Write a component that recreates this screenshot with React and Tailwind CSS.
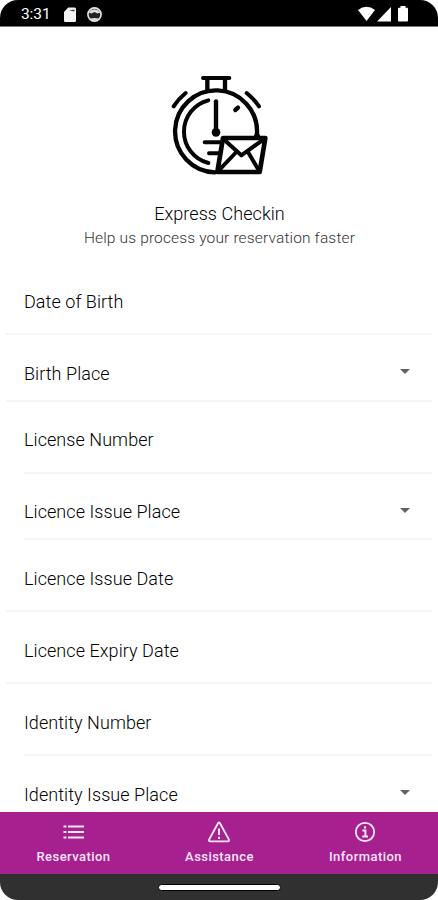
const fields = [
  { label: 'Date of Birth', inset: false },
  { label: 'Birth Place', inset: false, select: true },
  { label: 'License Number', inset: true },
  { label: 'Licence Issue Place', inset: true, select: true },
  { label: 'Licence Issue Date', inset: false },
  { label: 'Licence Expiry Date', inset: false },
  { label: 'Identity Number', inset: true },
  { label: 'Identity Issue Place', inset: true, select: true },
];

const StatusBar = () => (
  <header className="flex h-[27px] shrink-0 items-center justify-between border-b border-[#777] bg-black pl-[21px] pr-[29px] text-white">
    <div className="flex items-center">
      <span className="w-[29px] whitespace-nowrap pt-[3px] text-[15.5px] leading-none tracking-[-0.1px]">3:31</span>
      <svg className="ml-[14px] mt-[2px] h-[15px] w-[12px]" viewBox="0 0 12 15">
        <path d="M4.2 0.5H10.7Q12 0.5 12 2V13.5Q12 15 10.7 15H1.3Q0 15 0 13.5V5Z" fill="#f4f4f4" />
        <path d="M5 3.6L10.5 2.4V4.4Z" fill="#444" />
      </svg>
      <svg className="ml-[11px] mt-[2px] h-[15px] w-[15px]" viewBox="0 0 15 15">
        <circle cx="7.5" cy="7.5" r="6.6" fill="#222" stroke="#e8e8e8" strokeWidth="1.6" />
        <path d="M1.5 5.5Q7.5 -1 13.5 5.5L10.5 6.5L7.5 5L4.5 6.5Z" fill="#ddd" />
        <path d="M3 11.5Q7.5 10.5 12 11.5Q7.5 15.5 3 11.5Z" fill="#ddd" />
      </svg>
    </div>
    <svg className="mt-[1px] h-[16px] w-[51px]" viewBox="0 0 51 16" fill="#fff">
      <path d="M0 4Q8.5 -2.5 17 4L8.5 15Z" />
      <path d="M33 1V15.5H19Z" />
      <path d="M42.5 0H47.5V1.8H49Q50 1.8 50 3V14.5Q50 15.5 49 15.5H41Q40 15.5 40 14.5V3Q40 1.8 41 1.8H42.5Z" />
    </svg>
  </header>
);

const StopwatchMail = () => (
  <svg
    className="h-[120px] w-[120px]"
    viewBox="0 0 360 360"
    fill="none"
    stroke="#050505"
    strokeWidth="12"
    strokeLinecap="round"
    strokeLinejoin="round"
  >
    <path d="M129 39H208" strokeWidth="12" />
    <path d="M142 42V76M195 42V76" strokeWidth="13" />
    <path d="M165 322A123 123 0 1 1 291 205" strokeWidth="13" />
    <path d="M145 106A97 97 0 0 0 145 294" />
    <path d="M41 124Q55 102 77 84M260 84Q281 101 297 124" />
    <path d="M168 109V195" strokeWidth="13" />
    <circle cx="168" cy="202" r="13" fill="#050505" stroke="none" />
    <path d="M226 135L234 128" strokeWidth="13" />
    <path d="M134 232H180M147 265H174" strokeWidth="12" />
    <path d="M189 219H316L299 321H172Z" fill="#fff" strokeWidth="14" />
    <path d="M191 223L244 271L311 223M176 317L229 261M264 261L297 317" />
    <circle cx="291" cy="213" r="9" fill="#050505" stroke="none" />
  </svg>
);

const Field = ({ label, inset, select }) => (
  <div className={`mr-[6px] ${inset ? 'ml-6' : 'ml-[6px]'}`}>
    <div
      className={`flex items-center justify-between border-b-2 border-[#f5f5f5] pr-[22px] ${
        select ? 'h-[66.5px] pt-[13px]' : 'h-[72px] pt-[7px]'
      } ${inset ? '' : 'pl-[18px]'}`}
    >
      <span className="whitespace-nowrap text-[18px] font-light leading-6 tracking-[0.06px] text-black">{label}</span>
      {select && (
        <svg className="mb-[4px] h-[5px] w-[10px]" viewBox="0 0 10 5">
          <path d="M0 0H10L5 5Z" fill="#626262" />
        </svg>
      )}
    </div>
  </div>
);

const ListIcon = () => (
  <svg className="ml-0.5 h-6 w-6" viewBox="0 0 24 24" stroke="#fbe6f7" strokeWidth="2">
    <path d="M1.5 6.5H4.5M1.5 12H4.5M1.5 17.5H4.5M6 6.5H22M6 12H22M6 17.5H22" />
  </svg>
);

const WarningIcon = () => (
  <svg className="h-6 w-6" viewBox="0 0 24 24" fill="none" stroke="#fbe6f7" strokeWidth="1.8" strokeLinejoin="round">
    <path d="M11.3 2.8Q12 1.8 12.7 2.8L22 19.8Q22.4 21.4 20.8 21.4H3.2Q1.6 21.4 2 19.8Z" />
    <path d="M12 8.6V15M12 16.8V18.9" strokeWidth="2" />
  </svg>
);

const InfoIcon = () => (
  <svg className="h-6 w-6" viewBox="0 0 24 24" fill="none" stroke="#fbe6f7" strokeWidth="1.8">
    <circle cx="12" cy="12" r="9.2" />
    <path d="M12 6.2V8.6M9.4 10.6H12.4V16.4M9.2 16.6H15" strokeWidth="2" />
  </svg>
);

const tabs = [
  { label: 'Reservation', Icon: ListIcon },
  { label: 'Assistance', Icon: WarningIcon },
  { label: 'Information', Icon: InfoIcon },
];

const App = () => (
  <div className="h-[900px] w-[438px] bg-white">
    <div className="flex h-full flex-col overflow-hidden rounded-[18px] bg-white font-['Roboto',sans-serif]">
      <StatusBar />

      <main className="min-h-0 flex-1 overflow-hidden">
        <div className="flex h-[236px] flex-col items-center pt-[38px]">
          <div className="pl-0.5">
            <StopwatchMail />
          </div>
          <h1 className="mt-[17px] whitespace-nowrap pl-px text-[18px] font-light leading-6 tracking-[0.06px] text-black">
            Express Checkin
          </h1>
          <p className="whitespace-nowrap pl-px text-[15.5px] font-light leading-6 tracking-[0.15px] text-[#333]">
            Help us process your reservation faster
          </p>
        </div>

        {fields.map((field) => (
          <Field key={field.label} {...field} />
        ))}
      </main>

      <nav className="grid h-[62px] shrink-0 grid-cols-3 bg-[#a7208f]">
        {tabs.map(({ label, Icon }) => (
          <button key={label} className="flex flex-col items-center pt-[8px]">
            <Icon />
            <span className="mt-1 whitespace-nowrap pl-px text-[13px] font-medium leading-[17px] tracking-[0.45px] text-[#fbe6f7]">
              {label}
            </span>
          </button>
        ))}
      </nav>

      <footer className="flex h-[26px] shrink-0 items-center justify-center bg-[#303030]">
        <div className="h-[7px] w-[123px] rounded-full border border-black bg-white" />
      </footer>
    </div>
  </div>
);

export default App;
